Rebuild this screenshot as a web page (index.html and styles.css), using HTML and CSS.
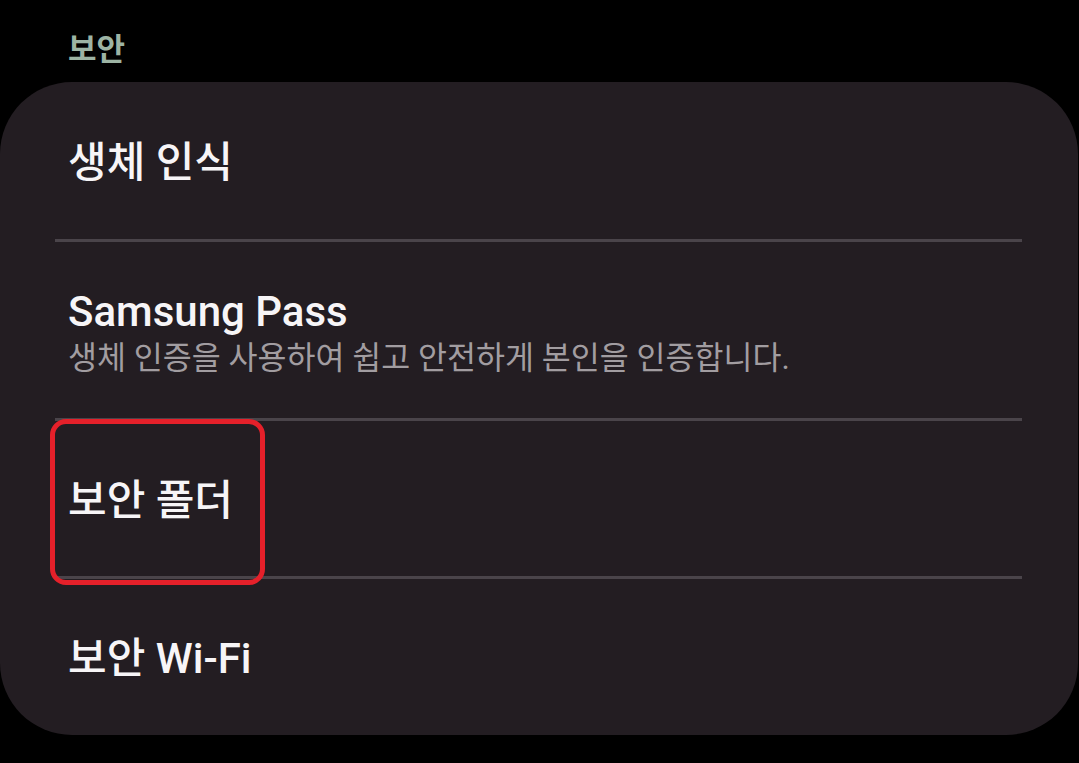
FILE: index.html
```html
<!DOCTYPE html>
<html lang="ko">

<head>
    <meta charset="UTF-8">
    <meta name="viewport" content="width=device-width, initial-scale=1.0">
    <link rel="stylesheet" href="styles.css">
    <title>보안</title>
</head>

<body>
    <div class="section-title">보안</div>
    <div class="card">
        <div class="item item-first">
            <div class="item-title">생체 인식</div>
        </div>
        <div class="divider"></div>
        <div class="item item-pass">
            <div class="item-title">Samsung Pass</div>
            <div class="item-sub">생체 인증을 사용하여 쉽고 안전하게 본인을 인증합니다.</div>
        </div>
        <div class="divider"></div>
        <div class="item item-folder">
            <div class="item-title">보안 폴더</div>
            <div class="highlight"></div>
        </div>
        <div class="divider"></div>
        <div class="item item-last">
            <div class="item-title">보안 Wi-Fi</div>
        </div>
    </div>
</body>

</html>
```

FILE: styles.css
```css
* {
    margin: 0;
    padding: 0;
    box-sizing: border-box;
}

body {
    background-color: black;
    font-family: Roboto, "Noto Sans CJK KR", sans-serif;
    width: 1079px;
    height: 763px;
    overflow: hidden;
}

.section-title {
    height: 82px;
    padding-left: 68px;
    padding-top: 24px;
    font-size: 31px;
    font-weight: 700;
    color: #9db4a4;
}

.card {
    width: 1078px;
    height: 653px;
    background-color: #231d22;
    border-radius: 72px;
    display: flex;
    flex-direction: column;
}

.item {
    display: flex;
    flex-direction: column;
    justify-content: center;
    padding-left: 68px;
    position: relative;
}

.item-first {
    height: 158px;
    padding-top: 4px;
}

.item-pass {
    height: 177px;
    padding-top: 6px;
}

.item-folder {
    height: 155px;
    padding-top: 4px;
}

.item-last {
    height: 157px;
    padding-top: 4px;
}

.item-title {
    font-size: 42px;
    font-weight: 500;
    color: #f7f5f7;
    line-height: 52px;
}

.item-sub {
    font-size: 31.5px;
    color: #a29da1;
    line-height: 42px;
}

.divider {
    height: 3px;
    margin: 0 56px 0 55px;
    background-color: #4a444a;
}

.highlight {
    position: absolute;
    left: 50px;
    top: -2px;
    width: 215px;
    height: 166px;
    border: 5px solid #e5202a;
    border-radius: 16px;
}
```
